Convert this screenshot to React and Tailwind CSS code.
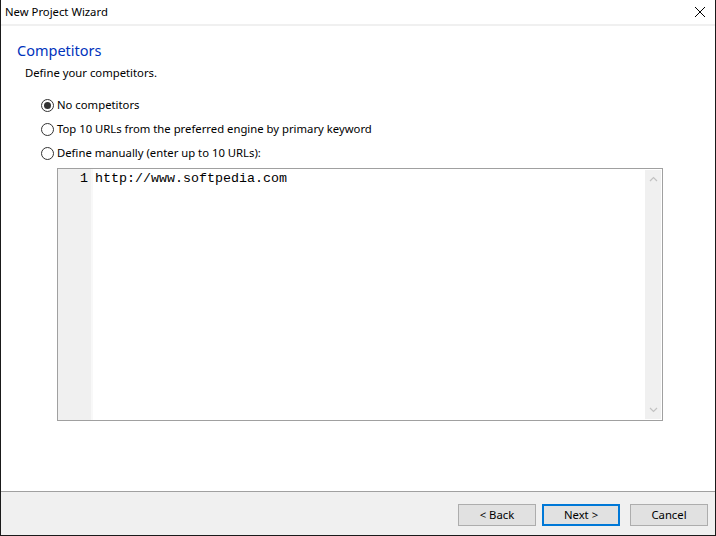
import React, { useState } from 'react';

const Radio = ({ checked, label, onClick }) => (
  <button type="button" onClick={onClick} className="flex items-center h-[20px] text-left">
    <span className="w-[13px] h-[13px] rounded-full border border-[#333] bg-white flex items-center justify-center">
      {checked && <span className="w-[7px] h-[7px] rounded-full bg-[#333]"></span>}
    </span>
    <span className="ml-[3px] text-[11.3px] text-black leading-none">{label}</span>
  </button>
);

const Btn = ({ children, primary, className = '' }) => (
  <button
    type="button"
    className={`w-[78px] h-[22px] flex items-center justify-center text-[11.3px] leading-none text-black bg-[#e1e1e1] ${
      primary ? 'border-2 border-[#0078d7]' : 'border border-[#adadad]'
    } ${className}`}
  >
    {children}
  </button>
);

const App = () => {
  const [mode, setMode] = useState('none');

  return (
    <div className="w-[716px] h-[536px] flex flex-col bg-white border-x border-b border-[#1a1a1a] font-['Noto_Sans',sans-serif] overflow-hidden">
      {/* Title bar */}
      <div className="h-[26px] flex items-center justify-between pl-[4px] pr-[9px] border-b-2 border-[#f0f0f0]">
        <span className="text-[11.3px] text-black">New Project Wizard</span>
        <svg width="12" height="12" viewBox="0 0 12 12" className="text-black">
          <path d="M1 1 L11 11 M11 1 L1 11" stroke="currentColor" strokeWidth="1" />
        </svg>
      </div>

      {/* Body */}
      <div className="flex-1 flex flex-col">
        <div className="pl-[16px] pt-[13px] text-[14.5px] leading-[22px] text-[#0033bc]">Competitors</div>
        <div className="pl-[24px] pt-[3px] text-[11.3px] leading-[18px] text-black">Define your competitors.</div>

        <div className="pl-[40px] pt-[13px] flex flex-col gap-[4px]">
          <Radio checked={mode === 'none'} label="No competitors" onClick={() => setMode('none')} />
          <Radio checked={mode === 'top'} label="Top 10 URLs from the preferred engine by primary keyword" onClick={() => setMode('top')} />
          <Radio checked={mode === 'manual'} label="Define manually (enter up to 10 URLs):" onClick={() => setMode('manual')} />
        </div>

        {/* Editor */}
        <div className="ml-[56px] mt-[5px] w-[606px] h-[253px] border border-[#a0a0a0] flex">
          <div className="w-[35px] bg-[#f0f0f0] border-r-2 border-[#f8f8f8] flex justify-end pr-[3px] pt-[2px] font-['Liberation_Mono',monospace] text-[13.33px] leading-[16px] text-black">
            1
          </div>
          <div className="flex-1 pl-[2px] pt-[2px] font-['Liberation_Mono',monospace] text-[13.33px] leading-[16px] text-black">
            http://www.softpedia.com
          </div>
          <div className="w-[16px] bg-[#f0f0f0] m-[1px] flex flex-col justify-between items-center py-[6px]">
            <svg width="9" height="6" viewBox="0 0 9 6">
              <path d="M1 5 L4.5 1.5 L8 5" fill="none" stroke="#c2c2c2" strokeWidth="1.2" />
            </svg>
            <svg width="9" height="6" viewBox="0 0 9 6">
              <path d="M1 1 L4.5 4.5 L8 1" fill="none" stroke="#c2c2c2" strokeWidth="1.2" />
            </svg>
          </div>
        </div>
      </div>

      {/* Footer */}
      <div className="h-[44px] bg-[#f0f0f0] border-t border-[#a0a0a0] flex items-start justify-end pr-[7px] pt-[12px]">
        <Btn>&lt; Back</Btn>
        <Btn primary className="ml-[6px]">Next &gt;</Btn>
        <Btn className="ml-[10px]">Cancel</Btn>
      </div>
    </div>
  );
};

export default App;
